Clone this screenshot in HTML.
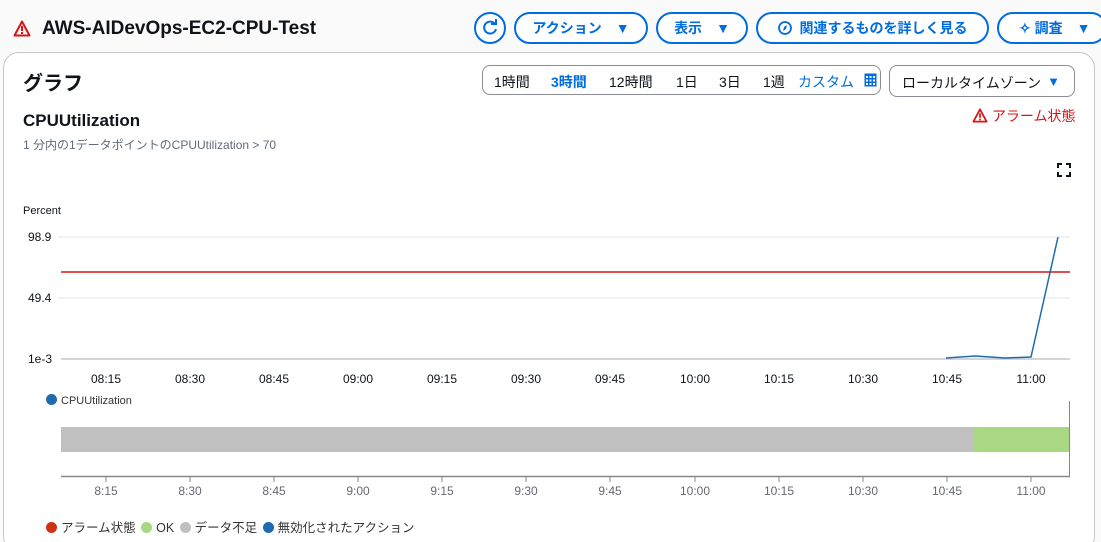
<!DOCTYPE html>
<html style="width:1101px;height:542px;overflow:hidden"><head><meta charset="utf-8"><style>
*{box-sizing:border-box;margin:0;padding:0}
body{width:1101px;height:542px;overflow:hidden;background:#fafafa;font-family:"Liberation Sans","Noto Sans CJK JP",sans-serif;color:#0f141a;position:relative}
.a{position:absolute;white-space:nowrap}
.btn{position:absolute;top:12px;height:32px;border:2px solid #006ce0;border-radius:16px;color:#006ce0;font-weight:bold;font-size:14px;display:flex;align-items:center;justify-content:center;gap:8px;background:#fff}
.btn .ar{font-size:14px;margin-left:6px}
.panel{position:absolute;left:3px;top:52px;width:1092px;height:500px;background:#fff;border:1px solid #c6c6cd;border-radius:16px}
.seg{position:absolute;left:482px;top:65px;width:399px;height:30px;border:1px solid #8c8c94;border-radius:8px;font-size:14px}
.seg span{position:absolute;top:6px}
.tk{font-size:12px;color:#0f141a;transform:translateX(-50%)}
.tk2{font-size:12px;color:#656871;transform:translateX(-50%)}
.dot{display:inline-block;width:11px;height:11px;border-radius:50%;vertical-align:-1px;margin-right:4px}
</style></head><body>
<svg class="a" style="left:13px;top:20px" width="18" height="17" viewBox="0 0 18 17"><path d="M9 1.5L1.5 15.5h15z" fill="none" stroke="#d91515" stroke-width="2" stroke-linejoin="round"/><rect x="8" y="6" width="2" height="5" fill="#d91515"/><rect x="8" y="12" width="2" height="2" fill="#d91515"/></svg>
<div class="a" style="left:42px;top:18px;font-size:19px;font-weight:bold">AWS-AIDevOps-EC2-CPU-Test</div>
<div class="btn" style="left:474px;width:32px;padding:0"><svg width="18" height="18" viewBox="0 0 18 18"><path d="M14 5A6 6 0 1 0 15 10" fill="none" stroke="#006ce0" stroke-width="2"/><path d="M10 5h5V0" fill="none" stroke="#006ce0" stroke-width="2"/></svg></div>
<div class="btn" style="left:514px;width:134px">アクション <span class="ar">▼</span></div>
<div class="btn" style="left:656px;width:92px">表示 <span class="ar">▼</span></div>
<div class="btn" style="left:756px;width:233px"><svg width="14" height="14" viewBox="0 0 14 14"><circle cx="7" cy="7" r="6" fill="none" stroke="#006ce0" stroke-width="1.8"/><path d="M9 4L6 6 5 10 8 8z" fill="#006ce0"/></svg>関連するものを詳しく見る</div>
<div class="btn" style="left:997px;width:110px;justify-content:flex-start;padding-left:20px">✧ 調査 <span class="ar">▼</span></div>
<div class="panel"></div>
<div class="a" style="left:23px;top:67px;font-size:20px;font-weight:bold">グラフ</div>
<div class="seg"><span style="left:11px">1時間</span><span style="left:68px;color:#006ce0;font-weight:bold">3時間</span><span style="left:126px">12時間</span><span style="left:193px">1日</span><span style="left:236px">3日</span><span style="left:280px">1週</span><span style="left:315px;color:#006ce0">カスタム</span>
<svg style="position:absolute;left:381px;top:7px" width="13" height="14" viewBox="0 0 13 14"><rect x="0.5" y="0.5" width="12" height="13" fill="#006ce0"/><g fill="#fff"><rect x="2" y="3" width="2" height="2"/><rect x="5.5" y="3" width="2" height="2"/><rect x="9" y="3" width="2" height="2"/><rect x="2" y="6.5" width="2" height="2"/><rect x="5.5" y="6.5" width="2" height="2"/><rect x="9" y="6.5" width="2" height="2"/><rect x="2" y="10" width="2" height="2"/><rect x="5.5" y="10" width="2" height="2"/><rect x="9" y="10" width="2" height="2"/></g></svg></div>
<div class="a" style="left:889px;top:65px;width:186px;height:32px;border:1px solid #8c8c94;border-radius:8px;font-size:14px;padding:7px 12px">ローカルタイムゾーン<span style="position:absolute;right:14px;top:8px;color:#006ce0;font-size:13px">▼</span></div>
<div class="a" style="left:972px;top:106px;font-size:14px;color:#d91515"><svg width="16" height="15" viewBox="0 0 18 17" style="vertical-align:-2px"><path d="M9 1.5L1.5 15.5h15z" fill="none" stroke="#d91515" stroke-width="2" stroke-linejoin="round"/><rect x="8" y="6" width="2" height="5" fill="#d91515"/><rect x="8" y="12" width="2" height="2" fill="#d91515"/></svg> アラーム状態</div>
<div class="a" style="left:23px;top:111px;font-size:17px;font-weight:bold">CPUUtilization</div>
<div class="a" style="left:23px;top:136px;font-size:12px;color:#5f6b7a">1 分内の1データポイントのCPUUtilization &gt; 70</div>
<svg class="a" style="left:1057px;top:163px" width="14" height="14" viewBox="0 0 14 14" fill="none" stroke="#0f141a" stroke-width="2"><path d="M1 5V1h4M9 1h4v4M13 9v4H9M5 13H1V9"/></svg>
<div class="a" style="left:23px;top:205px;font-size:11px">Percent</div>
<div class="a" style="left:28px;top:230px;font-size:12px">98.9</div>
<div class="a" style="left:28px;top:291px;font-size:12px">49.4</div>
<div class="a" style="left:28px;top:352px;font-size:12px">1e-3</div>
<svg class="a" style="left:0;top:0" width="1101" height="542">
<line x1="58" y1="237" x2="1070" y2="237" stroke="#f2f2f2" stroke-width="2"/>
<line x1="58" y1="298" x2="1070" y2="298" stroke="#f2f2f2" stroke-width="2"/>
<line x1="61" y1="359" x2="1070" y2="359" stroke="#c6c6cd" stroke-width="1.5"/>
<line x1="61" y1="272" x2="1070" y2="272" stroke="#d91515" stroke-width="1.5"/>
<polyline points="946,358 975,356 1005,358 1031,357 1058,237" fill="none" stroke="#1f6bb0" stroke-width="1.5"/>
<rect x="61" y="427" width="912" height="25" fill="#c0c0c0"/>
<rect x="973" y="427" width="96" height="25" fill="#a9d883"/>
<line x1="1069.5" y1="401" x2="1069.5" y2="477" stroke="#888" stroke-width="1"/>
<line x1="61" y1="476.5" x2="1070" y2="476.5" stroke="#888" stroke-width="1.5"/>
<g stroke="#888" stroke-width="1">
<line x1="106" y1="476" x2="106" y2="482"/><line x1="190" y1="476" x2="190" y2="482"/><line x1="274" y1="476" x2="274" y2="482"/><line x1="358" y1="476" x2="358" y2="482"/><line x1="442" y1="476" x2="442" y2="482"/><line x1="526" y1="476" x2="526" y2="482"/><line x1="610" y1="476" x2="610" y2="482"/><line x1="695" y1="476" x2="695" y2="482"/><line x1="779" y1="476" x2="779" y2="482"/><line x1="863" y1="476" x2="863" y2="482"/><line x1="947" y1="476" x2="947" y2="482"/><line x1="1031" y1="476" x2="1031" y2="482"/>
</g>
</svg>
<div class="a tk" style="left:106px;top:372px">08:15</div><div class="a tk" style="left:190px;top:372px">08:30</div><div class="a tk" style="left:274px;top:372px">08:45</div><div class="a tk" style="left:358px;top:372px">09:00</div><div class="a tk" style="left:442px;top:372px">09:15</div><div class="a tk" style="left:526px;top:372px">09:30</div><div class="a tk" style="left:610px;top:372px">09:45</div><div class="a tk" style="left:695px;top:372px">10:00</div><div class="a tk" style="left:779px;top:372px">10:15</div><div class="a tk" style="left:863px;top:372px">10:30</div><div class="a tk" style="left:947px;top:372px">10:45</div><div class="a tk" style="left:1031px;top:372px">11:00</div>
<div class="a" style="left:46px;top:394px;font-size:11px;color:#333"><span class="dot" style="background:#1f6bb0"></span>CPUUtilization</div>
<div class="a tk2" style="left:106px;top:484px">8:15</div><div class="a tk2" style="left:190px;top:484px">8:30</div><div class="a tk2" style="left:274px;top:484px">8:45</div><div class="a tk2" style="left:358px;top:484px">9:00</div><div class="a tk2" style="left:442px;top:484px">9:15</div><div class="a tk2" style="left:526px;top:484px">9:30</div><div class="a tk2" style="left:610px;top:484px">9:45</div><div class="a tk2" style="left:695px;top:484px">10:00</div><div class="a tk2" style="left:779px;top:484px">10:15</div><div class="a tk2" style="left:863px;top:484px">10:30</div><div class="a tk2" style="left:947px;top:484px">10:45</div><div class="a tk2" style="left:1031px;top:484px">11:00</div>
<div class="a" style="left:46px;top:517px;font-size:12.5px;color:#333"><span class="dot" style="background:#d13212"></span>アラーム状態 <span class="dot" style="background:#a9d883;margin-left:2px"></span>OK <span class="dot" style="background:#c0c0c0;margin-left:2px"></span>データ不足 <span class="dot" style="background:#1f6bb0;margin-left:2px"></span>無効化されたアクション</div>
</body></html>
